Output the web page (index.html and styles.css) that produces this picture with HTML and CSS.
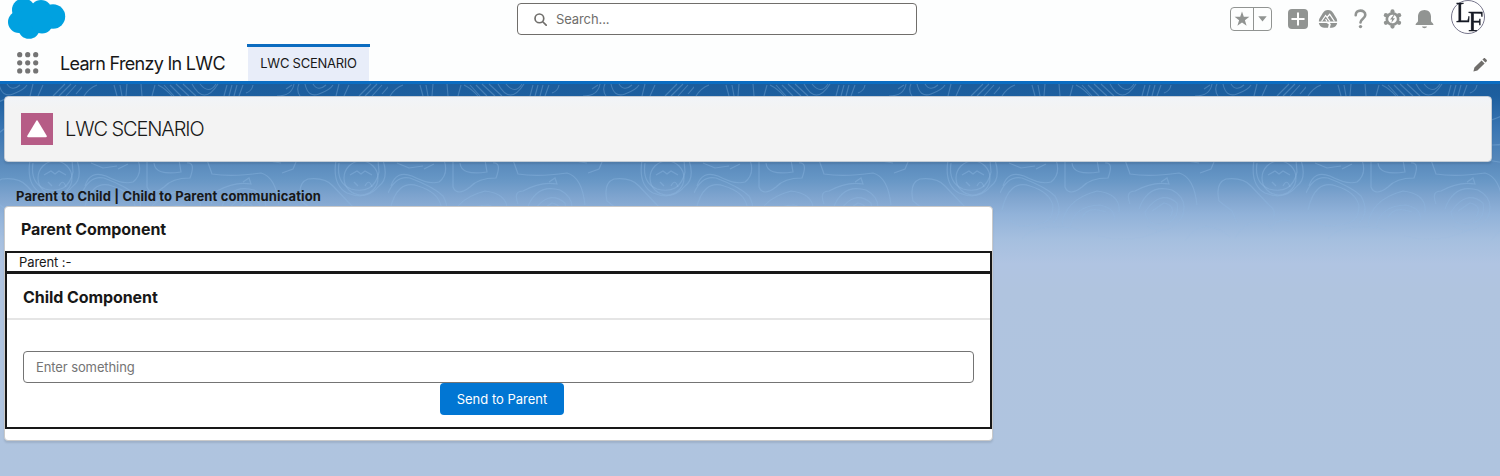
FILE: index.html
```html
<!DOCTYPE html>
<html lang="en">
<head>
<meta charset="utf-8">
<title>LWC SCENARIO</title>
<link rel="stylesheet" href="styles.css">
</head>
<body>
<header class="global-header">
  <div class="brand">
    <svg class="cloud" width="58" height="40" viewBox="0 0 58 40" fill="#00a1e0"><circle cx="15.500" cy="10" r="11.500"/><circle cx="33" cy="11" r="11"/><circle cx="11" cy="22" r="11"/><circle cx="45" cy="16.500" r="12.200"/><circle cx="21" cy="28" r="10.800"/><circle cx="34" cy="22.500" r="11"/><path d="M15 4h20v20H15z"/></svg>
  </div>
  <div class="search">
    <svg width="13" height="13" viewBox="0 0 14 14" fill="none" stroke="#706e6b" stroke-width="1.8" stroke-linecap="round"><circle cx="5.8" cy="5.8" r="4.7"/><path d="M9.4 9.4l3.700 3.700"/></svg>
    <span>Search...</span>
  </div>
  <div class="actions">
    <div class="favorites">
      <span class="fav-star"><svg width="16" height="16" viewBox="0 0 16 16" fill="#919492"><path d="M8 .6l1.8 5.2h5.6l-4.5 3.4 1.7 5.5L8 11.4l-4.6 3.3 1.7-5.5L.6 5.800h5.600z"/></svg></span>
      <span class="fav-more"><svg width="9" height="6" viewBox="0 0 9 6" fill="#919492"><path d="M.3.3h8.400L4.500 5.500z"/></svg></span>
    </div>
    <svg class="act add" width="20" height="20" viewBox="0 0 20 20"><rect width="20" height="20" rx="4" fill="#919492"/><path d="M10 4.200v11.600M4.200 10h11.600" stroke="#fff" stroke-width="2" stroke-linecap="round"/></svg>
    <svg class="act trail" width="20" height="18" viewBox="0 0 20 18"><path d="M10 0C12.500 0 14 1 15.500 3.500l3 5q.7 1.300.7 3H.8q0-1.700.7-3l3-5C6 1 7.500 0 10 0z" fill="#919492"/><path d="M.8 13h7.700l2.300 1.300-.8 3.500H6C3 17.500 1.300 15.500.8 13zM12 13h7.200c-.5 2.500-2.200 4.300-5.200 4.700h-2.200l1-3.200z" fill="#919492"/><path d="M3.500 11.500L7.600 5.500l4.400 6M9.400 7l2.300-2.700 4.800 7.200M7.600 9l1.400 2.500" fill="none" stroke="#fff" stroke-width="1.200"/></svg>
    <svg class="act help" width="13" height="20" viewBox="0 0 13 20"><path d="M1.700 6.200C1.700 3.300 3.700 1.600 6.400 1.600s4.900 1.700 4.900 4.300c0 3.700-4.800 3.800-4.800 7.600" fill="none" stroke="#919492" stroke-width="2.600" stroke-linecap="round"/><circle cx="6.500" cy="17.600" r="1.700" fill="#919492"/></svg>
    <svg class="act gear" width="19" height="20" viewBox="0 0 19 20"><g fill="#919492"><circle cx="9.500" cy="10" r="7"/><circle cx="9.500" cy="2.400" r="2.100"/><circle cx="9.500" cy="17.600" r="2.100"/><circle cx="2.900" cy="6.200" r="2.100"/><circle cx="16.100" cy="6.200" r="2.100"/><circle cx="2.900" cy="13.800" r="2.100"/><circle cx="16.100" cy="13.800" r="2.100"/></g><circle cx="9.500" cy="10" r="4.300" fill="#fff"/><path d="M10.500 6L7 10.600h2.100L8.300 14l3.700-4.800H9.800L11.300 6z" fill="#919492"/></svg>
    <svg class="act bell" width="19" height="19" viewBox="0 0 19 19" fill="#919492"><path d="M9.500 0C5.500 0 3 2.800 3 6.500V11c0 1.600-2.500 2-2.500 4h18c0-2-2.500-2.400-2.500-4V6.500C16 2.800 13.500 0 9.500 0zM7 16.500h5c-.5 2.300-4.500 2.300-5 0z"/></svg>
    <div class="avatar"><span class="mono-l">L</span><span class="mono-f">F</span></div>
  </div>
</header>
<nav class="app-nav">
  <svg class="launcher" width="22" height="22" viewBox="0 0 22 22" fill="#747474"><circle cx="2.700" cy="2.700" r="2.600"/><circle cx="10.700" cy="2.700" r="2.600"/><circle cx="18.700" cy="2.700" r="2.600"/><circle cx="2.700" cy="10.800" r="2.600"/><circle cx="10.700" cy="10.800" r="2.600"/><circle cx="18.700" cy="10.800" r="2.600"/><circle cx="2.700" cy="18.900" r="2.600"/><circle cx="10.700" cy="18.900" r="2.600"/><circle cx="18.700" cy="18.900" r="2.600"/></svg>
  <span class="app-name">Learn Frenzy In LWC</span>
  <a class="tab"><span>LWC SCENARIO</span></a>
  <svg class="pencil" width="14" height="14" viewBox="0 0 14 14" fill="#706e6b"><path d="M.4 13.600l1-4L8.600 2.400l3 3-7.200 7.200zM9.400 1.600L10.600.4c.5-.5 1.100-.5 1.600 0l1.400 1.400c.5.500.5 1.100 0 1.600l-1.200 1.200z"/></svg>
</nav>
<main class="stage">
  <svg class="topo" width="1500" height="170">
    <defs>
      <linearGradient id="fade" x1="0" y1="0" x2="0" y2="1"><stop offset="0" stop-color="#fff"/><stop offset=".65" stop-color="#fff"/><stop offset="1" stop-color="#000"/></linearGradient>
      <mask id="m"><rect width="1500" height="170" fill="url(#fade)"/></mask>
      <pattern id="contours" x="82" y="0" width="306" height="170" patternUnits="userSpaceOnUse">
        <g fill="none" stroke="#8cb6e2" stroke-opacity=".36" stroke-width="1.100">
          <path d="M2 15q5-8 13-11M32 4l3 11M38 4l2 11M45 3l-1 12M59 3l1 12M70 15l3-11M76 4q8 4 14 11M82 4l10 11M88 4l11 11M94 3l13 12M101 3l13 12M110 3q12 22 26 0M118 3q9 11 16 0M142 15l3-11M147 15l3-11M152 15l3-11M157 15l4-11M164 12q6-2 7-8M195 15q15 0 17-12M204 8l6-4M217 3q-3 6 1 12M223 3q3 14 14 10t14-9M231 3q5 8 13 1M257 3l-3 12M267 4l-5 11M277 15l12-12M283 15l12-12M290 15l10-11M300 13l7-8"/>
          <path d="M0 30q24-8 48 1t55-2 48 6 60-8 44 5 51-2M0 50q35 10 72-3t80 8 76-7 78 2"/>
        </g>
        <g fill="none" stroke="#94bce6" stroke-opacity=".36" stroke-width="1.200">
          <path d="M56 79q5 14-5 22-10 3-27-6-16-6-21 10M0 112q8-18 22-15 24 9 33 18 9 16-2 27M2 129q7-31 28-24 20 6 23 20 0 18-18 18-16 6-26-5M65 80v26q4 10 17 0 8-9 26-9 6-16-3-15M72 82q1 13 27 9l-2-12M125 79l5 14q20 3 49-1 15 4 18 32M62 145q2-26 35-35 24 3 22 21M70 147q3-22 30-23 17 4 14 16M82 137q5-13 24-6M130 123q-5-13 5-13 18-10 34-7l-2-6-6 4M139 128q9-26 33-19 17 9 10 27-15 21-34 9M145 131q15-23 32-9 3 17-13 21-16 3-19-12M152 130l12-8q13 3 6 14"/>
          <path d="M219 120q-4-18 7-22 17-2 25 7l18 19q8 6 4 14M219 120l13 10 5 12M301 79q6 19-4 26-12 15-32 7-15-8-11-33M257 82q-3 20 12 26 23 6 28-17l-1-12"/>
          <circle cx="279" cy="97" r="17"/>
          <path d="M268 94l7-4 4 3 4-3 7 4M283 105q4-8 7 1M272 101l4 4M181 79l18 3M200 92l11-4 3-7M9 82l12 5 14-2M36 88l10-5"/>
          <path d="M22 158q10-12 30-12t28 3M98 155q36 9 66-7M185 160q17-27 45-4M235 157q19-30 39-7M270 146q13-12 23-4"/>
        </g>
      </pattern>
    </defs>
    <g mask="url(#m)"><rect width="1500" height="170" fill="url(#contours)"/></g>
  </svg>
  <section class="page-header">
    <span class="page-icon"><svg width="20" height="18" viewBox="0 0 20 18" fill="#fff"><path d="M9.300.8q.7-1 1.400 0l9 15q.5 1.400-1 1.400H1.300q-1.500 0-1-1.400z"/></svg></span>
    <h1>LWC SCENARIO</h1>
  </section>
  <p class="caption">Parent to Child | Child to Parent communication</p>
  <section class="card">
    <h2 class="parent-title">Parent Component</h2>
    <div class="outline">
      <p class="parent-line">Parent :-</p>
      <div class="child">
        <h2 class="child-title">Child Component</h2>
        <div class="child-body">
          <input class="field" type="text" placeholder="Enter something">
          <button class="send" type="button">Send to Parent</button>
        </div>
      </div>
    </div>
  </section>
</main>
</body>
</html>
```
FILE: styles.css
```css
* { box-sizing: border-box; }
body { margin: 0; width: 1500px; height: 476px; overflow: hidden; background: #fdfefe; color: #181818; font: 13px/20px Inter, "Liberation Sans", sans-serif; }
h1, h2, p { margin: 0; }
svg { display: block; flex: none; }
.global-header { display: grid; grid-template-columns: 517px 400px 1fr; height: 44px; align-items: start; }
.brand { padding-left: 8px; }
.search { display: flex; align-items: center; gap: 9px; height: 32px; margin-top: 3px; padding-left: 16px; border: 1px solid #706e6b; border-radius: 4px; background: #fff; color: #706e6b; }
.search span { font-size: 13px; letter-spacing: -.1px; }
.actions { display: flex; align-items: center; justify-content: flex-end; height: 38px; padding-right: 15px; }
.favorites { display: flex; width: 42px; height: 24px; border: 1px solid #919492; border-radius: 4px; margin-right: 16px; }
.fav-star, .fav-more { display: flex; align-items: center; justify-content: center; }
.fav-star { width: 23px; border-right: 1px solid #919492; }
.fav-more { flex: 1; }
.add { margin-right: 10px; }
.trail { margin-right: 16px; }
.help { margin-right: 16px; }
.gear { margin-right: 13px; }
.bell { margin-right: 17px; }
.avatar { position: relative; width: 34px; height: 34px; margin-top: -5px; border: 1px solid #77768c; border-radius: 50%; background: #fff; font-family: "Liberation Serif", serif; color: #161a24; -webkit-text-stroke: .4px #161a24; }
.mono-l, .mono-f { position: absolute; line-height: 30px; transform-origin: 0 50%; }
.mono-l { left: 4px; top: -4px; font-size: 30px; transform: scaleX(.8); }
.mono-f { left: 16px; top: 5px; font-size: 29px; transform: scaleX(.95); }
.app-nav { display: flex; align-items: center; height: 37px; padding-left: 17px; padding-right: 13px; }
.app-name { margin-left: 21px; width: 188px; font-size: 18px; letter-spacing: -.7px; white-space: nowrap; padding-top: 2px; }
.tab { align-self: stretch; width: 123px; margin-left: -1px; border-top: 3px solid #0b6cc0; background: linear-gradient(#e8edf9, #e8edf9) 1px 0 / 121px 100% no-repeat; display: flex; align-items: center; justify-content: center; padding-bottom: 2px; }
.tab span { font-size: 13px; letter-spacing: -.25px; }
.pencil { margin-left: auto; margin-top: 4px; }
.stage { position: relative; height: 395px; padding: 12px 8px 0 4px; border-top: 3px solid #0b6dc2; background: linear-gradient(#1c5d9c 0, #1d5f9f 12px, #3a76b3 45px, #5889bb 78px, #6696c5 95px, #80a5cf 114px, #91b2d9 130px, #a5bfdf 155px, #b0c4e2 180px, #b0c4df 205px, #afc4df 100%); }
.topo { position: absolute; left: 0; top: -3px; }
.page-header { position: relative; display: flex; align-items: center; gap: 12px; width: 1488px; height: 66px; padding-left: 16px; border: 1px solid #c4ccd5; border-radius: 4px; background: linear-gradient(#f1f4f8 0, #f3f3f3 12px); box-shadow: 0 2px 2px rgba(0,0,0,.1); }
.page-icon { display: flex; align-items: center; justify-content: center; width: 32px; height: 32px; background: #b65c86; }
h1 { font-size: 20px; font-weight: 300; letter-spacing: -1.1px; }
.caption { position: relative; margin: 24px 0 0 12px; font-weight: 700; letter-spacing: .13px; }
.card { position: relative; width: 989px; height: 235px; border: 1px solid #c9c9c9; border-radius: 4px; background: #fff; box-shadow: 0 2px 2px rgba(0,0,0,.1); }
h2 { font-size: 16px; font-weight: 700; line-height: 24px; letter-spacing: -.07px; }
.parent-title { height: 44px; padding: 10px 16px; }
.outline { height: 178px; border: 2px solid #181818; display: flex; flex-direction: column; }
.parent-line { height: 18px; padding-left: 12px; line-height: 18px; letter-spacing: -.1px; }
.child { flex: 1; border-top: 3px solid #181818; }
.child-title { height: 46px; padding: 11px 16px 0; border-bottom: 2px solid #e5e5e5; }
.child-body { display: flex; flex-direction: column; align-items: center; padding: 31px 16px 0; }
.field { width: 100%; height: 32px; padding: 0 12px; border: 1px solid #747474; border-radius: 4px; background: #fff; font: inherit; letter-spacing: -.1px; }
.field::placeholder { color: #747474; opacity: 1; }
.send { width: 124px; height: 32px; margin-left: 7px; padding: 0; border: 0; border-radius: 4px; background: #0176d3; color: #fff; font: inherit; }
```
